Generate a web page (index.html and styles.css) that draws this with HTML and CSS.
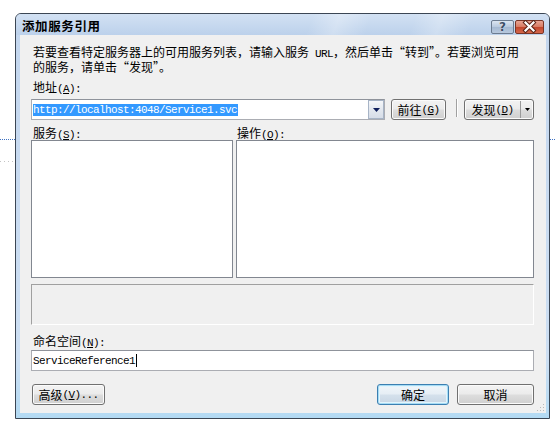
FILE: index.html
```html
<!DOCTYPE html>
<html lang="zh-CN">
<head>
<meta charset="utf-8">
<title>添加服务引用</title>
<link rel="stylesheet" href="styles.css">
</head>
<body>
<div class="dots dots-blue-l"></div>
<div class="dots dots-blue-r"></div>
<div class="dots dots-gray-l"></div>
<div class="window">
  <div class="titlebar">
    <span class="title">添加服务引用</span>
    <div class="caption-btns">
      <span class="cap-btn help">?</span>
      <span class="cap-btn close">
        <svg width="27" height="13" viewBox="0 0 27 13"><path d="M9.5 2.5 L17.5 10.5 M17.5 2.5 L9.5 10.5" stroke="#5a2418" stroke-width="4.2" stroke-linecap="square" fill="none"/><path d="M9.5 2.5 L17.5 10.5 M17.5 2.5 L9.5 10.5" stroke="#fff" stroke-width="2.2" stroke-linecap="square" fill="none"/></svg>
      </span>
    </div>
  </div>
  <div class="client">
    <p class="intro">若要查看特定服务器上的可用服务列表，请输入服务<span class="m"> URL</span>，然后单击“转到”。若要浏览可用<br>的服务，请单击“发现”。</p>
    <div class="label lbl-addr">地址<span class="m">(<u>A</u>):</span></div>
    <div class="addr-row">
      <div class="combo">
        <span class="sel m">http://localhost:4048/Service1.svc</span>
        <span class="drop"><svg width="7" height="4" viewBox="0 0 7 4"><path d="M0 0 H7 L3.5 4 Z" fill="#0f1f5c"/></svg></span>
      </div>
      <button class="btn go">前往<span class="m">(<u>G</u>)</span></button>
      <span class="sep"></span>
      <div class="btn split">
        <span class="split-main">发现<span class="m">(<u>D</u>)</span></span>
        <span class="split-arrow"><svg width="5" height="3" viewBox="0 0 5 3"><path d="M0 0 H5 L2.5 3 Z" fill="#000"/></svg></span>
      </div>
    </div>
    <div class="lists-labels">
      <span class="ll-svc">服务<span class="m">(<u>S</u>):</span></span>
      <span class="ll-ops">操作<span class="m">(<u>O</u>):</span></span>
    </div>
    <div class="lists">
      <div class="listbox"></div>
      <div class="listbox"></div>
    </div>
    <div class="panel"></div>
    <div class="label lbl-ns">命名空间<span class="m">(<u>N</u>):</span></div>
    <div class="textbox"><span class="m">ServiceReference1</span><span class="caret"></span></div>
    <div class="footer">
      <button class="btn adv">高级<span class="m">(<u>V</u>)...</span></button>
      <span class="spacer"></span>
      <button class="btn ok">确定</button>
      <button class="btn cancel">取消</button>
    </div>
    <svg class="grip" width="8" height="8" viewBox="0 0 8 8"><g fill="#b9b9b9"><rect x="6" y="0" width="1" height="1"/><rect x="3" y="3" width="1" height="1"/><rect x="6" y="3" width="1" height="1"/><rect x="0" y="6" width="1" height="1"/><rect x="3" y="6" width="1" height="1"/><rect x="6" y="6" width="1" height="1"/></g></svg>
  </div>
</div>
</body>
</html>
```
FILE: styles.css
```css
* { box-sizing: border-box; }
html, body { margin: 0; }
body {
  width: 556px;
  height: 428px;
  background: #fff;
  position: relative;
  overflow: hidden;
  padding: 13px 0 0 15px;
  font: 12px/12px "Noto Sans CJK SC", sans-serif;
  color: #000;
}
.m {
  font: 11px/12px "Liberation Mono", monospace;
  letter-spacing: -0.6px;
}
u { text-decoration: underline; text-underline-offset: 1px; }

.dots { position: absolute; height: 1px; }
.dots-blue-l { left: 0; top: 139px; width: 15px; background: repeating-linear-gradient(90deg, #3f72c2 0 1px, transparent 1px 2px); }
.dots-blue-r { left: 550px; top: 139px; width: 6px; background: repeating-linear-gradient(90deg, #3f72c2 0 1px, transparent 1px 2px); }
.dots-gray-l { left: 0; top: 161px; width: 14px; background: repeating-linear-gradient(90deg, #c4c4c4 0 1px, transparent 1px 4px); }

.window {
  width: 535px;
  height: 406px;
  border: 1px solid #3b4654;
  border-radius: 6px 6px 0 0;
  background: linear-gradient(180deg, #c3d6ee 0%, #cddff3 85%, #b3daf3 100%);
  display: flex;
  flex-direction: column;
  position: relative;
}
.titlebar {
  height: 21px;
  display: flex;
  align-items: center;
  padding: 0 5px 0 6px;
  border-radius: 5px 5px 0 0;
  background:
    linear-gradient(110deg, rgba(255,255,255,0) 55%, rgba(255,255,255,.28) 60%, rgba(255,255,255,0) 66%, rgba(255,255,255,0) 74%, rgba(255,255,255,.25) 79%, rgba(255,255,255,0) 85%),
    linear-gradient(180deg, #d2e1f3 0%, #bcd1eb 100%);
}
.title {
  font-weight: bold;
  font-size: 12.5px;
  letter-spacing: 0.6px;
  flex: 1;
  padding-top: 3px;
}
.caption-btns { display: flex; gap: 1px; margin-top: 4px; }
.cap-btn {
  height: 14px;
  border: 1px solid #6b7b90;
  border-radius: 2px;
  display: flex;
  align-items: center;
  justify-content: center;
}
.help {
  width: 23px;
  background: linear-gradient(180deg, #dbe5f1 0%, #b8c9de 50%, #a5b9d2 51%, #b7c8dd 100%);
  color: #3d4f66;
  font: bold 12px/12px "DejaVu Sans", sans-serif;
  text-shadow: 0 0 1px #fff;
}
.close {
  width: 29px;
  border-color: #7a3526;
  background: linear-gradient(180deg, #e9a493 0%, #d77a62 50%, #c2452b 51%, #d4684c 100%);
}

.client {
  flex: 1;
  margin: 0 3px 5px 4px;
  background: #f0f0f0;
  padding: 10px 12px 0 11px;
  display: flex;
  flex-direction: column;
  position: relative;
}
.intro { margin: 0; padding-left: 2px; line-height: 13px; white-space: nowrap; }
.label { padding-left: 2px; height: 12px; }
.lbl-addr { margin-top: 8px; }
.addr-row { margin-top: 6px; display: flex; height: 21px; }
.combo {
  width: 354px;
  height: 21px;
  border: 1px solid #abadb3;
  border-top-color: #8f939b;
  background: #fff;
  display: flex;
  align-items: center;
  padding-left: 1px;
  position: relative;
}
.sel { background: #3399ff; color: #fff; height: 12px; margin-top: 1px; padding-right: 1px; }
.drop {
  position: absolute;
  right: 0;
  top: 0;
  width: 16px;
  height: 19px;
  border: 1px solid #a7b4c6;
  background: linear-gradient(180deg, #f5f7fa 0%, #e3e8ef 50%, #d6dde8 100%);
  display: flex;
  align-items: center;
  justify-content: center;
}
.btn {
  height: 21px;
  border: 1px solid #707070;
  border-radius: 3px;
  background: linear-gradient(180deg, #f3f3f3 0%, #ebebeb 48%, #dddddd 52%, #cfcfcf 100%);
  box-shadow: inset 0 0 0 1px #fbfbfb;
  font: inherit;
  color: #000;
  padding: 0;
  margin: 0;
  display: flex;
  align-items: center;
  justify-content: center;
}
.go { width: 55px; margin-left: 6px; }
.sep { width: 2px; height: 18px; margin: 0 6px 0 10px; border-left: 1px solid #a0a0a0; border-right: 1px solid #fff; }
.split { width: 70px; justify-content: flex-start; }
.split-main { width: 56px; display: flex; justify-content: center; border-right: 1px solid #9a9a9a; height: 17px; align-items: center; }
.split-arrow { flex: 1; display: flex; justify-content: center; align-items: center; }

.lists-labels { margin-top: 7px; height: 12px; display: grid; grid-template-columns: 202px 298px; column-gap: 3px; }
.ll-svc { padding-left: 2px; }
.ll-ops { padding-left: 1px; }
.lists { margin-top: 1px; height: 138px; display: grid; grid-template-columns: 202px 298px; column-gap: 3px; }
.listbox { border: 1px solid #828790; background: #fff; }
.panel {
  margin-top: 6px;
  height: 41px;
  border: 1px solid;
  border-color: #a0a0a0 #fff #fff #a0a0a0;
}
.lbl-ns { margin-top: 10px; }
.textbox {
  margin-top: 3px;
  height: 21px;
  border: 1px solid #abadb3;
  border-top-color: #8f939b;
  background: #fff;
  display: flex;
  align-items: center;
  padding-left: 1px;
}
.caret { width: 1px; height: 13px; background: #000; margin-left: 1px; }
.footer { margin-top: 13px; display: flex; height: 21px; }
.adv { width: 73px; margin-left: 1px; }
.spacer { flex: 1; }
.ok {
  width: 72px;
  border-color: #3c7fb1;
  box-shadow: inset 0 0 0 1px #a6dcf5, inset 0 0 0 2px #e2f4fc;
  background: linear-gradient(180deg, #f1f6fa 0%, #e6eef5 48%, #d5e1ec 52%, #c8d6e4 100%);
}
.cancel { width: 77px; margin-left: 8px; }
.grip { position: absolute; right: 1px; bottom: 1px; }
```
